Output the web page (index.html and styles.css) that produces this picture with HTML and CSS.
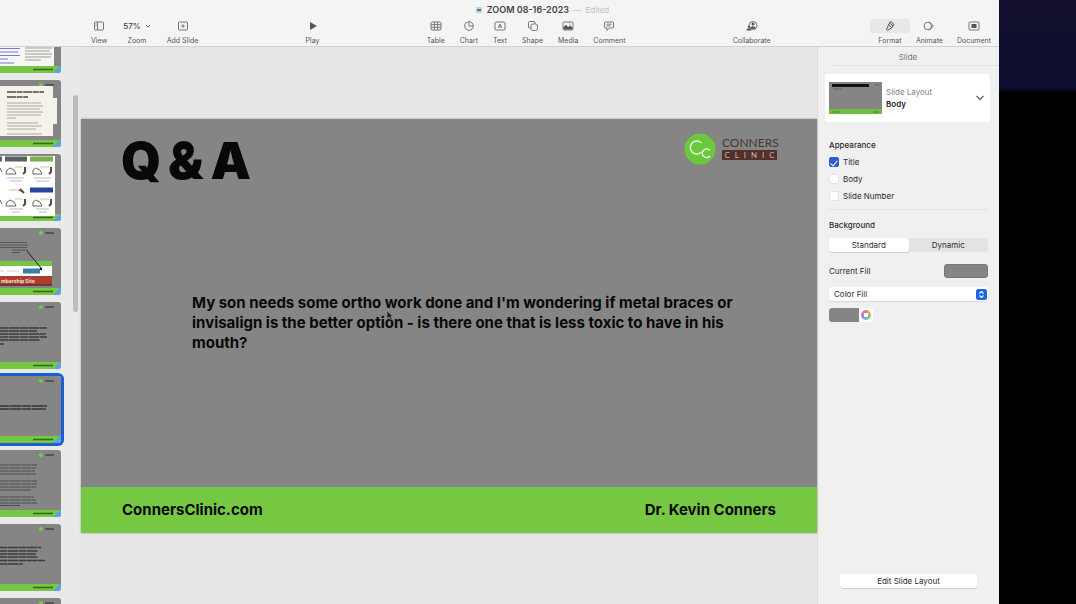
FILE: index.html
```html
<!DOCTYPE html>
<html lang="en">
<head>
<meta charset="utf-8">
<title>ZOOM 08-16-2023</title>
<link rel="stylesheet" href="styles.css">
</head>
<body>
<svg class="defs" aria-hidden="true">
  <defs>
    <g id="slide-base">
      <rect width="61" height="67" fill="#858585"/>
      <rect y="60" width="61" height="7" fill="#76c843"/>
      <circle cx="41" cy="5" r="2" fill="#76c843"/>
      <path d="M45 5h9" stroke="#5a5553" stroke-width="2"/>
      <path d="M33 63.500h20" stroke="#35651f" stroke-width="1.300"/>
    </g>
    <path id="corner" d="M61 59v8h-8z" fill="#5aa3ea"/>
  </defs>
</svg>
<div class="app">
  <header class="toolbar">
    <div class="titlebar">
      <svg class="doc" viewBox="0 0 8 8"><rect x="1" y="1" width="6" height="6" rx="1" fill="#b9d5e2"/><path d="M2 3h4v2H2z" fill="#52778b"/></svg>
      <h1 class="doc-name">ZOOM 08-16-2023</h1><span class="edited">— &nbsp;Edited</span>
    </div>
    <nav class="tools">
      <div class="group wide">
        <button class="tool"><svg class="icon" viewBox="0 0 12 12"><rect x="1.500" y="2" width="9" height="8" rx="1"/><path d="M4.500 2v8M2.500 4h1M2.500 6h1"/></svg><span>View</span></button>
        <button class="tool"><span class="percent">57% <svg class="tiny" viewBox="0 0 6 6"><path d="M1 2l2 2 2-2"/></svg></span><span>Zoom</span></button>
        <button class="tool"><svg class="icon" viewBox="0 0 12 12"><rect x="1.500" y="2" width="9" height="8" rx="1"/><path d="M6 4.200v3.600M4.200 6h3.600"/></svg><span>Add Slide</span></button>
      </div>
      <button class="tool"><svg class="icon" viewBox="0 0 12 12"><path class="solid" d="M3 2l7 4-7 4z"/></svg><span>Play</span></button>
      <div class="group">
        <button class="tool"><svg class="icon" viewBox="0 0 12 12"><rect x="1" y="2" width="10" height="8" rx="1"/><path d="M1 4.600h10M1 7.300h10M4.400 2v8M7.700 2v8"/></svg><span>Table</span></button>
        <button class="tool"><svg class="icon" viewBox="0 0 12 12"><circle cx="6" cy="6" r="4.300"/><path d="M6 1.700V6h4.300"/></svg><span>Chart</span></button>
        <button class="tool"><svg class="icon" viewBox="0 0 12 12"><rect x="1" y="2" width="10" height="8" rx="1"/><path d="M4.300 8L6 4l1.700 4M5 6.700h2"/></svg><span>Text</span></button>
        <button class="tool"><svg class="icon" viewBox="0 0 12 12"><path d="M4 8H2.500a1 1 0 0 1-1-1V2.500a1 1 0 0 1 1-1H7a1 1 0 0 1 1 1V4"/><rect x="4" y="4" width="6.500" height="6.500" rx="2"/></svg><span>Shape</span></button>
        <button class="tool"><svg class="icon" viewBox="0 0 12 12"><rect x="1" y="2" width="10" height="8" rx="1"/><path class="solid" d="M1.500 9.500V7L4 4.800l2 2.300 2-1.500 2.500 2v2z"/><circle class="solid" cx="8" cy="4" r=".6"/></svg><span>Media</span></button>
        <button class="tool"><svg class="icon" viewBox="0 0 12 12"><path d="M2.500 2h7a1 1 0 0 1 1 1v4a1 1 0 0 1-1 1H6.500L4 10.500V8H2.500a1 1 0 0 1-1-1V3a1 1 0 0 1 1-1zM3.500 4.200h5M3.500 6h4"/></svg><span>Comment</span></button>
      </div>
      <button class="tool"><svg class="icon" viewBox="0 0 12 12"><circle cx="7" cy="5.500" r="4"/><circle class="solid" cx="7" cy="4" r="1.500"/><path class="solid" d="M4 8.800c.5-3.500 5.500-3.500 6 0zM.5 10.500c0-3 4.500-3 5 0z"/><circle class="solid" cx="3" cy="6.800" r="1.200"/></svg><span>Collaborate</span></button>
      <div class="group side">
        <button class="tool active"><svg class="icon" viewBox="0 0 12 12"><path d="M6.500 1.500l3.500 2.800-2 3.400-3.500-2.700zM4.500 5L2.500 9.500l1 .8L8 7.700M5.700 3.200l3.400 2.700"/></svg><span>Format</span></button>
        <button class="tool"><svg class="icon" viewBox="0 0 12 12"><circle cx="4.800" cy="6" r="3.700"/><path d="M6 1.500L10.500 6 6 10.500"/></svg><span>Animate</span></button>
        <button class="tool"><svg class="icon" viewBox="0 0 12 12"><rect x="1" y="2" width="10" height="8" rx="1"/><rect class="solid" x="3.500" y="4" width="5" height="4"/></svg><span>Document</span></button>
      </div>
    </nav>
  </header>

  <div class="workspace">
    <aside class="rail">
      <div class="thumbs">
        <svg class="thumb" viewBox="0 0 61 67"><use href="#slide-base"/><path d="M0 0h54v60H0z" fill="#f6f6f3"/><path d="M0 42.500h20M0 46h18M0 49.500h20M0 53h8M0 57h14" stroke="#7a76d8"/><path d="M25 42h27M25 45h25M25 48h27M25 51h26M25 54h16" stroke="#9b9b98"/><use href="#corner"/></svg>
        <svg class="thumb" viewBox="0 0 61 67"><use href="#slide-base"/><path d="M0 6h53v12h4v26h-4v12H0z" fill="#f4f2e9"/><path d="M7 12h37M7 17h21" stroke="#4b4943" stroke-width="1.500" stroke-dasharray="9 .6 6 .6"/><path d="M7 23h34M7 26h36M7 29h33M7 32h36M7 35h34M7 38h9M7 43h31M7 46h35M7 49h29M7 54h35" stroke="#aeaba2"/><use href="#corner"/></svg>
        <svg class="thumb" viewBox="0 0 61 67"><use href="#slide-base"/><path d="M0 2h55v60H0z" fill="#fff"/><path d="M0 5h2M5 5h22" stroke="#58635f" stroke-width="5"/><path d="M30 5h23" stroke="#78af50" stroke-width="5"/><path d="M30 36h23" stroke="#2644a0" stroke-width="5"/><path d="M0 14l2 4M0 46l2 4M7 16l3-2 4 2 2 4H6zM33 16l3-2 4 2 2 4h-9zM7 48l3-2 4 2 2 4H6zM33 48l3-2 4 2 2 4h-9zM18 36l5 2" fill="none" stroke="#666"/><path d="M25 13v5l-2 2M51 13v5l-2 2M25 45v5l-2 2M51 45v5l-2 2M20 35l4 4" fill="none" stroke="#5d4747" stroke-width="2"/><path d="M15 13h8M40 13h9M15 45h8M40 45h9M9 36h8" stroke="#d8c48a"/><path d="M7 24h17M34 24h17M10 27h12M36 27h13M10 55h13M36 55h13M12 58h8M39 58h8" stroke="#bbb"/><use href="#corner"/></svg>
        <svg class="thumb" viewBox="0 0 61 67"><use href="#slide-base"/><path d="M0 14.500h27M0 17h28M0 19.500h27M12 22h16M12 24.500h8" stroke="#555"/><path d="M0 33h52v5H0z" fill="#78c447"/><path d="M0 38h52v10H0z" fill="#fff"/><path d="M0 43h4M7 43h12" stroke="#ccc"/><path d="M23 43h17" stroke="#397fa4" stroke-width="5"/><path d="M0 48h52v10H0z" fill="#aa3d2b"/><path d="M0 57h52" stroke="#79352a" stroke-width="2"/><text x="1" y="55" class="mini">mbership Site</text><path d="M27 23l14 17" stroke="#222"/><circle cx="41" cy="41" r="1.200"/><use href="#corner"/></svg>
        <svg class="thumb" viewBox="0 0 61 67"><use href="#slide-base"/><path d="M0 26h47M0 29h37M0 32h46M0 35h47M0 38h40M0 42h4" stroke="#3c3c3c" stroke-width="1.300" stroke-dasharray="8 .5 11 .5"/><use href="#corner"/></svg>
        <svg class="thumb selected" viewBox="0 0 61 67"><use href="#slide-base"/><path d="M0 30h47M0 33h46" stroke="#333" stroke-width="1.300" stroke-dasharray="9 .5 12 .5"/><use href="#corner"/></svg>
        <svg class="thumb" viewBox="0 0 61 67"><use href="#slide-base"/><path d="M0 15h37M0 18h36M0 21h35M0 24h36M0 31h37M0 34h37M0 37h36M0 40h31M0 47h34M0 50h36M0 53h37M0 55.500h20" stroke="#4c4c4c" stroke-dasharray="9 .5 12 .5"/><use href="#corner"/></svg>
        <svg class="thumb" viewBox="0 0 61 67"><use href="#slide-base"/><path d="M0 23.500h41M0 27h38M0 30h36M0 33h38M0 36.500h45M0 40h23" stroke="#3c3c3c" stroke-width="1.300" stroke-dasharray="7 .5 11 .5"/><use href="#corner"/></svg>
        <svg class="thumb" viewBox="0 0 61 67"><use href="#slide-base"/></svg>
      </div>
      <div class="scroll"></div>
    </aside>

    <main class="canvas">
      <article class="slide">
        <div class="slide-head">
          <h2 class="slide-title">Q&thinsp;&amp;&thinsp;A</h2>
          <div class="brand">
            <svg class="brand-mark" viewBox="0 0 32 32"><circle cx="16" cy="16" r="15.500" fill="#6bc83c"/><g fill="none" stroke="#e9f8df" stroke-width="1.500" stroke-linecap="round"><path d="M17 9.500a6.500 6.500 0 1 0 0 10"/><path d="M25.500 17a4.300 4.300 0 1 0 0 6.400"/></g></svg>
            <div class="brand-text"><span class="brand-name">CONNERS</span><span class="brand-sub"><i>C</i><i>L</i><i>I</i><i>N</i><i>I</i><i>C</i></span></div>
          </div>
        </div>
        <p class="question">My son needs some ortho work done and I'm wondering if metal braces or invisalign is the better option - is there one that is less toxic to have in his mouth?</p>
        <footer class="slide-foot"><span>ConnersClinic.com</span><span>Dr. Kevin Conners</span></footer>
        <svg class="cursor" viewBox="0 0 8 10"><path d="M1 0v8l2-2 1.500 3 1.500-.7L4.700 5.500H7z" fill="#222" stroke="#999" stroke-width=".5"/></svg>
      </article>
    </main>

    <aside class="inspector">
      <h2 class="tab">Slide</h2>
      <button class="layout">
        <svg class="layout-thumb" viewBox="0 0 53 32"><path fill="#858585" d="M0 0h53v32H0z"/><path d="M0 27h53v5H0z" fill="#70bd40"/><path d="M3 3.500h37" stroke="#111" stroke-width="3"/><path d="M4 7h10M46 3h4" stroke="#666"/><path d="M3 30h8M44 30h6" stroke="#4b8530"/></svg>
        <span class="layout-text"><span class="muted">Slide Layout</span><b>Body</b></span>
        <svg class="chev" viewBox="0 0 10 10"><path d="M1.500 3L5 6.500 8.500 3"/></svg>
      </button>
      <section class="section appearance">
        <h3>Appearance</h3>
        <label class="check"><input type="checkbox" checked>Title</label>
        <label class="check"><input type="checkbox">Body</label>
        <label class="check"><input type="checkbox">Slide Number</label>
      </section>
      <section class="section background">
        <h3>Background</h3>
        <div class="segments"><button class="segment on">Standard</button><button class="segment">Dynamic</button></div>
        <div class="fill-row"><span>Current Fill</span><span class="swatch"></span></div>
        <div class="select-wrap">
          <select aria-label="Fill type"><option>Color Fill</option></select>
          <svg class="stepper" viewBox="0 0 11 11"><rect width="11" height="11" rx="2.500" fill="#1b66e0"/><path d="M3.500 4.500l2-2 2 2M3.500 6.500l2 2 2-2" fill="none" stroke="#fff" stroke-width="1.100"/></svg>
        </div>
        <div class="color-row">
          <button class="color" aria-label="Fill color"></button>
          <button class="wheel" aria-label="Color wheel"><span class="ring"></span></button>
        </div>
      </section>
      <button class="edit">Edit Slide Layout</button>
    </aside>
  </div>
</div>
<div class="desktop"></div>
</body>
</html>
```
FILE: styles.css
```css
* { box-sizing: border-box; }
body {
  margin: 0;
  height: 100vh;
  display: flex;
  overflow: hidden;
  background: #000;
  color: #2b2b2b;
  font: 8px/12px Inter, "Liberation Sans", sans-serif;
}
h1, h2, h3, p { margin: 0; font: inherit; }
button { margin: 0; padding: 0; border: 0; background: none; font: inherit; color: inherit; }
svg { display: block; flex: none; }
.defs { position: absolute; width: 0; height: 0; }

.app { flex: 1; min-width: 0; display: flex; flex-direction: column; background: #e6e6e6; }
.desktop { width: 77px; background: linear-gradient(#110f2b, #0c0d2f 88px, #000 92px); }

/* Toolbar */
.toolbar { height: 47px; flex: none; background: #f4f4f4; border-bottom: 1px solid #d2d2d2; }
.titlebar { height: 19px; display: flex; align-items: center; justify-content: center; gap: 4px; padding-left: 85px; }
.doc { width: 8px; height: 8px; }
.doc-name { font-size: 9px; font-weight: 600; color: #444; }
.edited { font-size: 8px; color: #c2c2c2; }
.tools { display: flex; justify-content: space-between; padding: 0 8px 0 91px; }
.group { display: flex; gap: 15px; }
.group.wide { gap: 16px; }
.group.side { gap: 14px; }
.tool { display: flex; flex-direction: column; align-items: center; gap: 3px; font-size: 7px; line-height: 10px; color: #555; }
.icon { width: 12px; height: 14px; fill: none; stroke: #777; stroke-width: 1; }
.solid { fill: #555; stroke: none; }
.percent { height: 14px; display: flex; align-items: center; gap: 4px; font-size: 8px; font-weight: 500; color: #444; }
.tiny { width: 6px; height: 6px; fill: none; stroke: #777; }
.active .icon { width: 40px; margin: 0 -8px; padding: 1px 0; background: #e8e8e8; border-radius: 3px; stroke: #555; }

.workspace { flex: 1; min-height: 0; display: flex; }

/* Slide navigator, scrolled part-way through the deck */
.rail { width: 81px; flex: none; display: flex; gap: 12px; overflow: hidden; background: #e9e9e9; }
.thumbs { display: flex; flex-direction: column; gap: 7px; margin-top: -41px; }
.thumb { width: 61px; height: 67px; border-radius: 0 3px 3px 0; }
.thumb.selected { box-shadow: 0 0 0 3px #1c5fd0; }
.mini { font-size: 5px; font-weight: 700; fill: #f4dfd8; }
.scroll { width: 5px; height: 217px; margin-top: 48px; border-radius: 3px; background: #bdbdbd; }

/* Slide */
.canvas { flex: 1; min-width: 0; display: flex; align-items: center; }
.slide { position: relative; width: 100%; aspect-ratio: 16 / 9; display: flex; flex-direction: column; background: #858585; color: #080808; box-shadow: 0 0 2px #999; }
.slide-head { display: flex; justify-content: space-between; padding: 17px 40px 0; }
.slide-title { font-size: 51px; line-height: 50px; font-weight: 900; }
.brand { display: flex; align-items: center; gap: 6px; height: 26px; }
.brand-mark { width: 32px; height: 32px; }
.brand-text { width: 55px; display: flex; flex-direction: column; gap: 1px; color: #493632; }
.brand-name { font: 12px/12px Lato, sans-serif; }
.brand-sub { display: flex; justify-content: space-around; background: #54302a; color: #c9b8b3; font: 8px/10px Lato, sans-serif; }
.brand-sub i { font-style: normal; }
.question { flex: 1; display: flex; align-items: center; padding: 0 76px 26px 111px; font-size: 15px; line-height: 20px; font-weight: 700; }
.slide-foot { height: 46px; display: flex; align-items: center; justify-content: space-between; padding: 0 41px; background: #76c843; font-size: 15px; line-height: 20px; font-weight: 700; }
.cursor { position: absolute; left: 305px; top: 192px; width: 8px; height: 10px; }

/* Inspector */
.inspector { width: 182px; flex: none; display: flex; flex-direction: column; background: #f0f0f0; border-left: 1px solid #dcdcdc; padding: 0 9px 16px 7px; }
.tab { margin-left: 8px; margin-right: -9px; padding: 4px 16px 2px 0; text-align: center; color: #777; border-bottom: 1px solid #e2e2e2; }
.layout { margin-top: 8px; height: 48px; display: flex; align-items: center; gap: 4px; padding: 0 5px 0 4px; background: #fff; border-radius: 3px; text-align: left; }
.layout-thumb { width: 53px; height: 32px; }
.layout-text { flex: 1; display: flex; flex-direction: column; }
.muted { color: #858585; }
.layout-text b { font-weight: 600; color: #222; }
.chev { width: 10px; height: 10px; fill: none; stroke: #666; stroke-width: 1.3px; }
.section { margin: 0 2px 0 4px; display: flex; flex-direction: column; }
h3 { font-weight: 500; }
.appearance { padding: 17px 0 7px; gap: 5px; border-bottom: 1px solid #e2e2e2; }
.check { display: flex; align-items: center; gap: 4px; }
.check input { appearance: none; width: 10px; height: 10px; margin: 0; display: grid; place-items: center; background: #fff; border: 1px solid #e4e4e4; border-radius: 2px; }
.check input:checked { background: #2d5fd0; border-color: #2d5fd0; }
.check input:checked::before { content: ""; width: 3px; height: 6px; border: solid #fff; border-width: 0 1px 1px 0; transform: rotate(40deg); }
.background { padding-top: 9px; }
.segments { display: flex; margin-top: 7px; height: 14px; background: #e3e3e3; border-radius: 3px; }
.segment { flex: 1; border-radius: 3px; }
.segment.on { background: #fff; box-shadow: 0 1px 1px #ccc; }
.fill-row { margin-top: 12px; display: flex; justify-content: space-between; align-items: center; }
.swatch { width: 44px; height: 14px; border-radius: 3px; background: #858585; border: 1px solid #777; }
.select-wrap { margin-top: 9px; display: grid; align-items: center; }
.select-wrap > * { grid-area: 1 / 1; }
select { appearance: none; width: 100%; height: 14px; padding: 0 5px; border: 0; border-radius: 3px; background: #fff; color: inherit; font: inherit; box-shadow: 0 1px 1px #d8d8d8; }
.stepper { width: 11px; height: 11px; justify-self: end; margin-right: 1px; pointer-events: none; }
.color-row { display: flex; margin-top: 7px; height: 14px; }
.color { width: 30px; border-radius: 3px 0 0 3px; background: #858585; }
.wheel { width: 14px; display: grid; place-items: center; border-radius: 0 3px 3px 0; background: #fff; }
.ring { width: 10px; height: 10px; border-radius: 50%; background: radial-gradient(#fff 32%, transparent 36%), conic-gradient(#e87979, #d8b46a, #7fc77f, #6bb6cf, #9b84d8, #dc79b4, #e87979); }
.edit { margin: auto 13px 0 15px; height: 14px; border-radius: 3px; background: #fff; box-shadow: 0 1px 1px #d0d0d0; }
```
